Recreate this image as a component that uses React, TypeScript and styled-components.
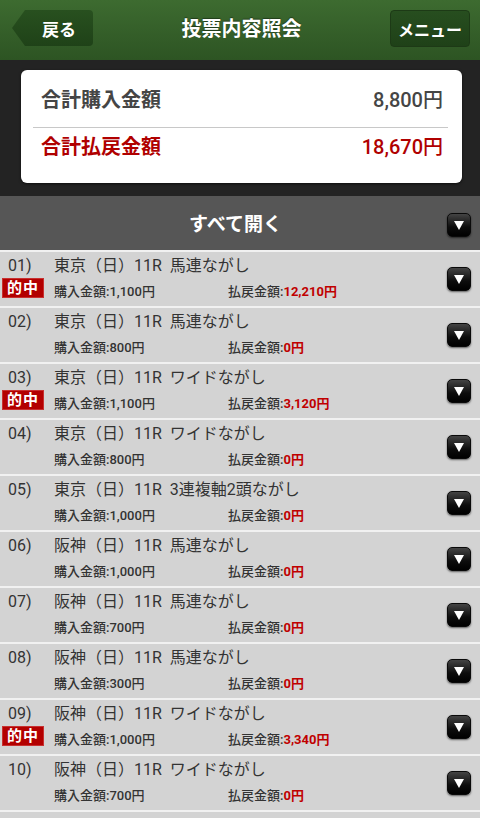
import styled, { createGlobalStyle } from "styled-components";

const GlobalStyle = createGlobalStyle`
    body {
        margin: 0;
        background: #d3d3d3;
        font-family: Roboto, "Noto Sans CJK JP", sans-serif;
    }
    * { box-sizing: border-box; }
`;

const Page = styled.div`
    width: 480px;
    min-height: 818px;
`;

const Header = styled.header`
    height: 60px;
    padding: 10px 10px 0 12px;
    display: grid;
    grid-template-columns: 81px 1fr 80px;
    align-items: start;
    background: linear-gradient(#3d6b30, #2d5423);
`;

const BackButton = styled.button`
    height: 36px;
    padding: 0 0 0 13px;
    border: none;
    border-radius: 4px;
    background: linear-gradient(#28501f, #1f4218);
    clip-path: polygon(13px 0, 100% 0, 100% 100%, 13px 100%, 0 50%);
    color: #fff;
    font: bold 17px Roboto, "Noto Sans CJK JP", sans-serif;
`;

const Title = styled.h1`
    margin: 0;
    line-height: 38px;
    text-align: center;
    color: #fff;
    font-size: 20px;
    font-weight: bold;
    text-shadow: 0 -1px 1px rgba(0, 0, 0, 0.4);
`;

const MenuButton = styled.button`
    height: 37px;
    padding: 0;
    border: 1px solid #1d3a16;
    border-radius: 4px;
    background: linear-gradient(#274e1f, #1f4118);
    color: #fff;
    font: bold 16px Roboto, "Noto Sans CJK JP", sans-serif;
`;

const Summary = styled.section`
    background: #232323;
    padding: 10px 18px 13px 21px;
`;

const Card = styled.div`
    background: #fff;
    border-radius: 6px;
    padding: 10px 14px 16px 12px;
    box-shadow: 0 1px 3px rgba(0, 0, 0, 0.6);
`;

const SumRow = styled.div<{ $red?: boolean }>`
    display: flex;
    justify-content: space-between;
    height: 40px;
    line-height: 40px;
    padding: 0 5px 0 8px;
    font-size: 20px;
    color: ${(p) => (p.$red ? "#b00000" : "#454545")};
`;

const SumLabel = styled.span`
    font-weight: bold;
`;

const SumValue = styled.span`
    font-weight: 500;
`;

const Divider = styled.hr`
    margin: 7px 0 -1px;
    border: none;
    border-top: 1px solid #c8c8c8;
`;

const OpenAllBar = styled.div`
    height: 54px;
    padding: 0 9px 0 0;
    display: grid;
    grid-template-columns: 1fr auto 1fr;
    align-items: center;
    background: #565656;
`;

const OpenAllText = styled.span`
    grid-column: 2;
    color: #fff;
    font-size: 19px;
    font-weight: bold;
    margin-top: -2px;
`;

const Toggle = styled.button<{ $shift?: number }>`
    width: 24px;
    height: 24px;
    padding: 0;
    display: flex;
    align-items: center;
    justify-content: center;
    border: 1px solid #0a0a0a;
    border-radius: 5px;
    background: linear-gradient(#444, #0c0c0c 60%, #000);
    box-shadow: 0 1px 2px rgba(0, 0, 0, 0.55);
    margin-top: ${(p) => p.$shift ?? 0}px;
`;

const BarToggle = styled(Toggle)`
    grid-column: 3;
    justify-self: end;
`;

const List = styled.ul`
    margin: 0;
    padding: 0;
    list-style: none;
    border-bottom: 2px solid #f1f1f1;
`;

const Row = styled.li`
    height: 56px;
    border-top: 2px solid #f1f1f1;
    padding: 4px 9px 0 0;
    display: grid;
    grid-template-columns: 54px 174px 1fr 24px;
    grid-template-rows: 20px 20px;
    row-gap: 2px;
    background: #d3d3d3;
    color: #333;
`;

const No = styled.span`
    padding-left: 8px;
    font-size: 16px;
    line-height: 20px;
`;

const RaceName = styled.span`
    grid-column: 2 / 4;
    font-size: 16px;
    line-height: 20px;
    white-space: nowrap;
`;

const HitBadge = styled.span`
    grid-column: 1;
    grid-row: 2;
    width: 42px;
    margin-left: 2px;
    background: #b30000;
    border: 1px solid #c83030;
    color: #fff;
    font-size: 15px;
    font-weight: bold;
    line-height: 18px;
    text-align: center;
    letter-spacing: 1px;
`;

const Amount = styled.span<{ $col: number }>`
    grid-column: ${(p) => p.$col};
    grid-row: 2;
    padding-top: 6px;
    font-size: 13px;
    line-height: 16px;
    font-weight: 500;
    white-space: nowrap;
`;

const Paid = styled.span`
    color: #c00000;
    font-weight: bold;
`;

const RowToggle = styled(Toggle)`
    grid-column: 4;
    grid-row: 1 / 3;
    align-self: center;
`;

const Triangle = () => (
    <svg width="10" height="9" viewBox="0 0 10 9">
        <polygon points="0,0 10,0 5,9" fill="#fff" />
    </svg>
);

interface IBet {
    no: string;
    venue: string;
    type: string;
    bought: string;
    paid: string;
    hit?: boolean;
}

const bets: IBet[] = [
    { no: "01", venue: "東京", type: "馬連ながし", bought: "1,100", paid: "12,210", hit: true },
    { no: "02", venue: "東京", type: "馬連ながし", bought: "800", paid: "0" },
    { no: "03", venue: "東京", type: "ワイドながし", bought: "1,100", paid: "3,120", hit: true },
    { no: "04", venue: "東京", type: "ワイドながし", bought: "800", paid: "0" },
    { no: "05", venue: "東京", type: "3連複軸2頭ながし", bought: "1,000", paid: "0" },
    { no: "06", venue: "阪神", type: "馬連ながし", bought: "1,000", paid: "0" },
    { no: "07", venue: "阪神", type: "馬連ながし", bought: "700", paid: "0" },
    { no: "08", venue: "阪神", type: "馬連ながし", bought: "300", paid: "0" },
    { no: "09", venue: "阪神", type: "ワイドながし", bought: "1,000", paid: "3,340", hit: true },
    { no: "10", venue: "阪神", type: "ワイドながし", bought: "700", paid: "0" },
];

function App() {
    return (
        <Page>
            <GlobalStyle />
            <Header>
                <BackButton>戻る</BackButton>
                <Title>投票内容照会</Title>
                <MenuButton>メニュー</MenuButton>
            </Header>
            <Summary>
                <Card>
                    <SumRow>
                        <SumLabel>合計購入金額</SumLabel>
                        <SumValue>8,800円</SumValue>
                    </SumRow>
                    <Divider />
                    <SumRow $red>
                        <SumLabel>合計払戻金額</SumLabel>
                        <SumValue>18,670円</SumValue>
                    </SumRow>
                </Card>
            </Summary>
            <OpenAllBar>
                <OpenAllText>すべて開く</OpenAllText>
                <BarToggle $shift={4}>
                    <Triangle />
                </BarToggle>
            </OpenAllBar>
            <List>
                {bets.map((bet) => (
                    <Row key={bet.no}>
                        <No>{bet.no})</No>
                        <RaceName>
                            {bet.venue}（日）11R&nbsp;&nbsp;{bet.type}
                        </RaceName>
                        {bet.hit && <HitBadge>的中</HitBadge>}
                        <Amount $col={2}>購入金額:{bet.bought}円</Amount>
                        <Amount $col={3}>
                            払戻金額:<Paid>{bet.paid}円</Paid>
                        </Amount>
                        <RowToggle $shift={4}>
                            <Triangle />
                        </RowToggle>
                    </Row>
                ))}
            </List>
        </Page>
    );
}

export default App;
